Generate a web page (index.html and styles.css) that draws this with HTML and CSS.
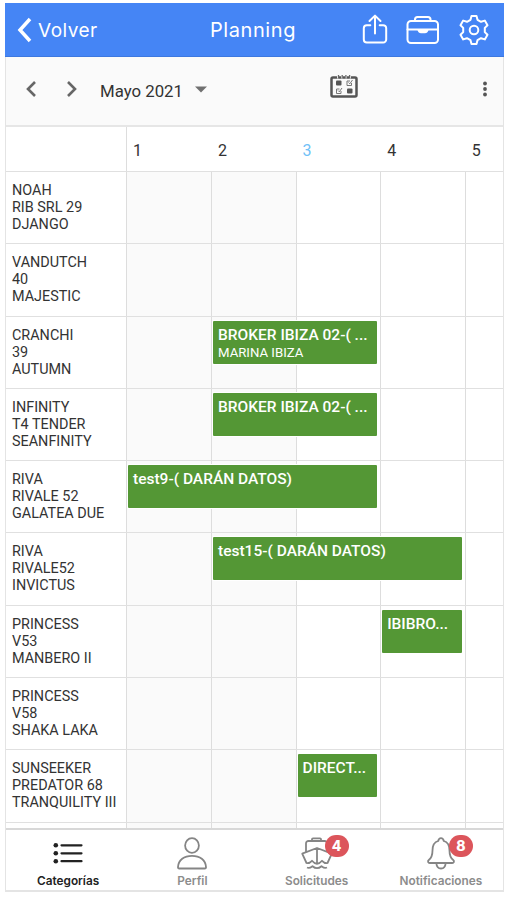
FILE: index.html
```html
<!doctype html>
<html lang="es">

<head>
    <meta charset="utf-8">
    <title>Planning</title>
    <link rel="stylesheet" href="styles.css">
</head>

<body>
    <div class="app">
        <header class="navbar">
            <a class="back">
                <svg width="17" height="28" viewBox="0 0 17 28"><path d="M14 3 4 14l10 11" fill="none" stroke="#fff" stroke-width="3.500"/></svg>
                <span class="back-label">Volver</span>
            </a>
            <h1 class="title">Planning</h1>
            <div class="actions">
                <svg width="26" height="32" viewBox="0 0 26 32"><path d="M8.300 11.200H4.800a3 3 0 0 0-3 3v11.300a3 3 0 0 0 3 3h16.400a3 3 0 0 0 3-3V14.200a3 3 0 0 0-3-3h-3.500M13 19.500V1.700M7.500 7 13 1.600 18.500 7"/></svg>
                <svg width="34" height="30" viewBox="0 0 34 30"><rect x="1.500" y="6" width="30.500" height="22" rx="3.500"/><path d="M9 6V4.500A2.500 2.500 0 0 1 11.500 2h10.500A2.500 2.500 0 0 1 24.500 4.500V6M1.500 14.500H32"/><path d="M12.500 15c.5 1.700 1.200 2.200 2.500 2.200h4c1.300 0 2-.5 2.500-2.200z" fill="#fff"/></svg>
                <svg width="32" height="32" viewBox="0 0 32 32"><circle cx="16" cy="16" r="4.300"/><path d="M13.500 2h5l1 3.800 3.500 2 3.800-1.200 2.700 4.600-2.700 2.700v4.200l2.700 2.700-2.700 4.600-3.800-1.200-3.500 2-1 3.800h-5l-1-3.800-3.500-2-3.800 1.200-2.700-4.600 2.700-2.700v-4.200l-2.700-2.700 2.700-4.600L9 7.800l3.500-2z"/></svg>
            </div>
        </header>

        <div class="toolbar">
            <svg class="prev" width="12" height="18" viewBox="0 0 12 18"><path d="m10 2-7 7 7 7"/></svg>
            <svg class="next" width="12" height="18" viewBox="0 0 12 18"><path d="m2 2 7 7-7 7"/></svg>
            <span class="month">Mayo 2021</span>
            <svg class="caret" width="12" height="7" viewBox="0 0 12 7"><path d="M0 .5h12l-6 6z"/></svg>
            <svg class="calendar" width="28" height="24" viewBox="0 0 28 24">
                <rect x="1.500" y="3.500" width="25" height="19" rx="1.500" fill="none" stroke="#555" stroke-width="2.500"/>
                <path d="M8 1v3.500m4-3.500v3.500m4-3.500v3.500m4-3.500v3.500" stroke="#fafafa" stroke-width="2"/>
                <path d="M8.500 4.500V1m3.700 3.500V1m3.700 3.500V1m3.700 3.500V1" stroke="#666" stroke-width="1.300"/>
                <rect x="6" y="6.500" width="5.500" height="5" rx="1" fill="#555"/>
                <rect x="17" y="14.500" width="5.500" height="5" rx="1" fill="#555"/>
                <path d="M21.500 9v2.500H17V7h3m-1.500 1.500 1.300 1.300L22.500 6M11 17v2.500H6.500V15h3M8 16.500l1.300 1.300L12 14" fill="none" stroke="#777" stroke-width="1"/>
            </svg>
            <svg class="more" width="6" height="16" viewBox="0 0 6 16"><circle cx="3" cy="2.500" r="1.900"/><circle cx="3" cy="8" r="1.900"/><circle cx="3" cy="13.500" r="1.900"/></svg>
        </div>

        <main class="timeline">
            <div class="row days">
                <div class="corner"></div>
                <div class="day">1</div>
                <div class="day">2</div>
                <div class="day today">3</div>
                <div class="day">4</div>
                <div class="day">5</div>
            </div>
            <div class="row">
                <div class="boat">NOAH<br>RIB SRL 29<br>DJANGO</div>
                <div class="cell past"></div><div class="cell past"></div><div class="cell"></div><div class="cell"></div><div class="cell"></div>
            </div>
            <div class="row">
                <div class="boat">VANDUTCH<br>40<br>MAJESTIC</div>
                <div class="cell past"></div><div class="cell past"></div><div class="cell"></div><div class="cell"></div><div class="cell"></div>
            </div>
            <div class="row">
                <div class="boat">CRANCHI<br>39<br>AUTUMN</div>
                <div class="cell past"></div><div class="cell past"></div><div class="cell"></div><div class="cell"></div><div class="cell"></div>
                <div class="event from-2 to-3"><div class="name">BROKER IBIZA 02-( ...</div><div class="place">MARINA IBIZA</div></div>
            </div>
            <div class="row">
                <div class="boat">INFINITY<br>T4 TENDER<br>SEANFINITY</div>
                <div class="cell past"></div><div class="cell past"></div><div class="cell"></div><div class="cell"></div><div class="cell"></div>
                <div class="event from-2 to-3"><div class="name">BROKER IBIZA 02-( ...</div></div>
            </div>
            <div class="row">
                <div class="boat">RIVA<br>RIVALE 52<br>GALATEA DUE</div>
                <div class="cell past"></div><div class="cell past"></div><div class="cell"></div><div class="cell"></div><div class="cell"></div>
                <div class="event from-1 to-3"><div class="name">test9-( DARÁN DATOS)</div></div>
            </div>
            <div class="row">
                <div class="boat">RIVA<br>RIVALE52<br>INVICTUS</div>
                <div class="cell past"></div><div class="cell past"></div><div class="cell"></div><div class="cell"></div><div class="cell"></div>
                <div class="event from-2 to-4"><div class="name">test15-( DARÁN DATOS)</div></div>
            </div>
            <div class="row">
                <div class="boat">PRINCESS<br>V53<br>MANBERO II</div>
                <div class="cell past"></div><div class="cell past"></div><div class="cell"></div><div class="cell"></div><div class="cell"></div>
                <div class="event from-4 to-4"><div class="name">IBIBRO...</div></div>
            </div>
            <div class="row">
                <div class="boat">PRINCESS<br>V58<br>SHAKA LAKA</div>
                <div class="cell past"></div><div class="cell past"></div><div class="cell"></div><div class="cell"></div><div class="cell"></div>
            </div>
            <div class="row">
                <div class="boat">SUNSEEKER<br>PREDATOR 68<br>TRANQUILITY III</div>
                <div class="cell past"></div><div class="cell past"></div><div class="cell"></div><div class="cell"></div><div class="cell"></div>
                <div class="event from-3 to-3"><div class="name">DIRECT...</div></div>
            </div>
            <div class="row">
                <div class="boat"></div>
                <div class="cell past"></div><div class="cell past"></div><div class="cell"></div><div class="cell"></div><div class="cell"></div>
            </div>
        </main>

        <nav class="tabs">
            <a class="tab active">
                <svg width="32" height="34" viewBox="0 0 32 34"><path d="M9.500 9.300h20M9.500 17.300h20M9.500 25.200h20" stroke-width="2.200"/><g fill="#222" stroke="none"><circle cx="3.800" cy="9.300" r="2.300"/><circle cx="3.800" cy="17.300" r="2.300"/><circle cx="3.800" cy="25.200" r="2.300"/></g></svg>
                <span class="tab-label">Categorías</span>
            </a>
            <a class="tab">
                <svg width="32" height="34" viewBox="0 0 32 34"><ellipse cx="16" cy="9.500" rx="6.900" ry="7.400"/><path d="M2 31c.5-7 6-11.100 14-11.100S29.500 24 30 31c.1.900-.4 1.500-1.300 1.500H3.300C2.400 32.500 1.900 31.900 2 31z"/></svg>
                <span class="tab-label">Perfil</span>
            </a>
            <a class="tab">
                <svg width="32" height="34" viewBox="0 0 32 34"><path d="M11 5V3.300a1 1 0 0 1 1-1h7a1 1 0 0 1 1 1V5M5 15.500V7.500A2.500 2.500 0 0 1 7.500 5h16A2.500 2.500 0 0 1 26 7.500v8M5.500 27 1.200 17.700 16 12l14.800 5.700L26.500 27c-2 .8-3.800-.5-5.500-2.200-1.400 1.700-3 3-5 3s-3.600-1.300-5-3C9.300 26.500 7.500 27.800 5.500 27zM16 12v15.500M6 31.500c2.500 1.200 4-.2 5.500-1.300 1.500 1.300 3 2 4.500 2s3-.7 4.500-2c1.500 1.100 3 2.500 5.500 1.300"/></svg>
                <span class="badge">4</span>
                <span class="tab-label">Solicitudes</span>
            </a>
            <a class="tab">
                <svg width="32" height="34" viewBox="0 0 32 34"><path d="M13.200 5c.4-1.900 1.300-2.900 2.800-2.900s2.400 1 2.800 2.900c4.700 1.300 5.700 5.300 5.700 9.500 0 5.500 1.300 7.700 3.700 9.500 1.400 1.100.8 3-1 3H4.800c-1.800 0-2.400-1.900-1-3 2.400-1.800 3.700-4 3.700-9.500 0-4.200 1-8.200 5.700-9.500zM11.300 27c.3 3.700 2 5.500 4.700 5.500s4.400-1.800 4.700-5.500"/></svg>
                <span class="badge">8</span>
                <span class="tab-label">Notificaciones</span>
            </a>
        </nav>
    </div>
</body>

</html>
```

FILE: styles.css
```css
* {
    box-sizing: border-box;
}

body {
    margin: 0;
    padding: 3px 3px 0 5px;
    background: #fff;
    font-family: Roboto, "Liberation Sans", sans-serif;
    color: #333;
}

.app {
    display: flex;
    flex-direction: column;
    width: 499px;
    height: 889px;
    border: solid #e4e4e4;
    border-width: 0 1px 2px;
}

.navbar {
    display: grid;
    grid-template-columns: 1fr auto 1fr;
    align-items: center;
    height: 54px;
    margin: 0 -1px;
    padding: 0 14px 0 11px;
    flex: none;
    background: #4585f5;
    border-bottom: 1px solid #3d78df;
    color: #fff;
    font-family: Inter, sans-serif;
}

.back {
    display: flex;
    align-items: center;
    gap: 5px;
}

.back-label {
    margin-top: 1px;
    font-size: 19px;
    letter-spacing: .5px;
}

.title {
    margin: 1px 0 0;
    font-size: 20px;
    font-weight: 400;
    letter-spacing: .6px;
}

.actions {
    display: flex;
    align-items: center;
    justify-content: flex-end;
    gap: 18px;
}

.actions svg {
    fill: none;
    stroke: #fff;
    stroke-width: 2;
    stroke-linejoin: round;
    stroke-linecap: round;
}

.toolbar {
    display: flex;
    align-items: center;
    flex: none;
    height: 70px;
    padding: 0 15px 4px 19px;
    background: #fafafa;
    border-bottom: 2px solid #e6e6e6;
}

.prev, .next {
    fill: none;
    stroke: #666;
    stroke-width: 2.6;
}

.next {
    margin-left: 29px;
}

.month {
    margin: 4px 0 0 22px;
    width: 83px;
    font-size: 16.8px;
    white-space: nowrap;
}

.caret {
    margin-left: 12px;
    fill: #707070;
}

.calendar {
    margin: -7px 0 0 123px;
}

.more {
    margin-left: auto;
    fill: #555;
}

.timeline {
    flex: 1;
    min-height: 0;
    overflow: hidden;
    border-bottom: 2px solid #d8d8d8;
}

.row {
    display: grid;
    grid-template-columns: 121px 85px repeat(4, 84.6px);
    height: 72.3px;
    border-bottom: 1px solid #e0e0e0;
}

.days {
    height: 45px;
}

.corner, .boat {
    grid-area: 1 / 1;
    border-right: 1px solid #ddd;
}

.day {
    padding: 14px 0 0 6px;
    font-size: 16px;
    line-height: 19px;
}

.today {
    color: #70c1f7;
}

.boat {
    padding: 10px 0 0 6px;
    font-size: 14.4px;
    line-height: 17px;
    white-space: nowrap;
}

.cell {
    grid-row: 1;
    border-right: 1px solid #ddd;
}

.cell:nth-child(2) { grid-column: 2; }
.cell:nth-child(3) { grid-column: 3; }
.cell:nth-child(4) { grid-column: 4; }
.cell:nth-child(5) { grid-column: 5; }
.cell:nth-child(6) { grid-column: 6; }

/* the last day runs past the right edge */
.cell:last-of-type {
    border-right: 0;
}

.past {
    background: #fafafa;
}

.event {
    grid-row: 1;
    height: 43px;
    margin: 4px 4px 0 1px;
    padding: 5px 0 0 5px;
    overflow: hidden;
    background: #549735;
    border-radius: 1px;
    box-shadow: 0 0 0 1px #fff;
    color: #fff;
    white-space: nowrap;
}

.from-1 { grid-column-start: 2; }
.from-2 { grid-column-start: 3; }
.from-3 { grid-column-start: 4; }
.from-4 { grid-column-start: 5; }
.to-3 { grid-column-end: 5; }
.to-4 { grid-column-end: 6; }

.name {
    font-size: 15.5px;
    font-weight: 500;
    line-height: 18px;
}

.place {
    font-size: 13.2px;
    line-height: 17px;
}

.tabs {
    display: grid;
    grid-template-columns: repeat(4, 1fr);
    flex: none;
    height: 60px;
}

.tab {
    position: relative;
    display: flex;
    flex-direction: column;
    align-items: center;
    padding-top: 6px;
    color: #8c8c8c;
    font-family: Inter, sans-serif;
}

.tab svg {
    fill: none;
    stroke: #858585;
    stroke-width: 1.8;
    stroke-linejoin: round;
}

.tab-label {
    margin-top: 4px;
    font-size: 11.8px;
    font-weight: 600;
    line-height: 14px;
}

.active {
    color: #222;
}

.active svg {
    stroke: #222;
    stroke-linecap: round;
}

.badge {
    position: absolute;
    top: 5px;
    left: calc(50% + 8px);
    width: 24px;
    height: 22px;
    border-radius: 11px;
    background: #dc555b;
    color: #fff;
    font-size: 14px;
    font-weight: 800;
    line-height: 22px;
    text-align: center;
}
```
